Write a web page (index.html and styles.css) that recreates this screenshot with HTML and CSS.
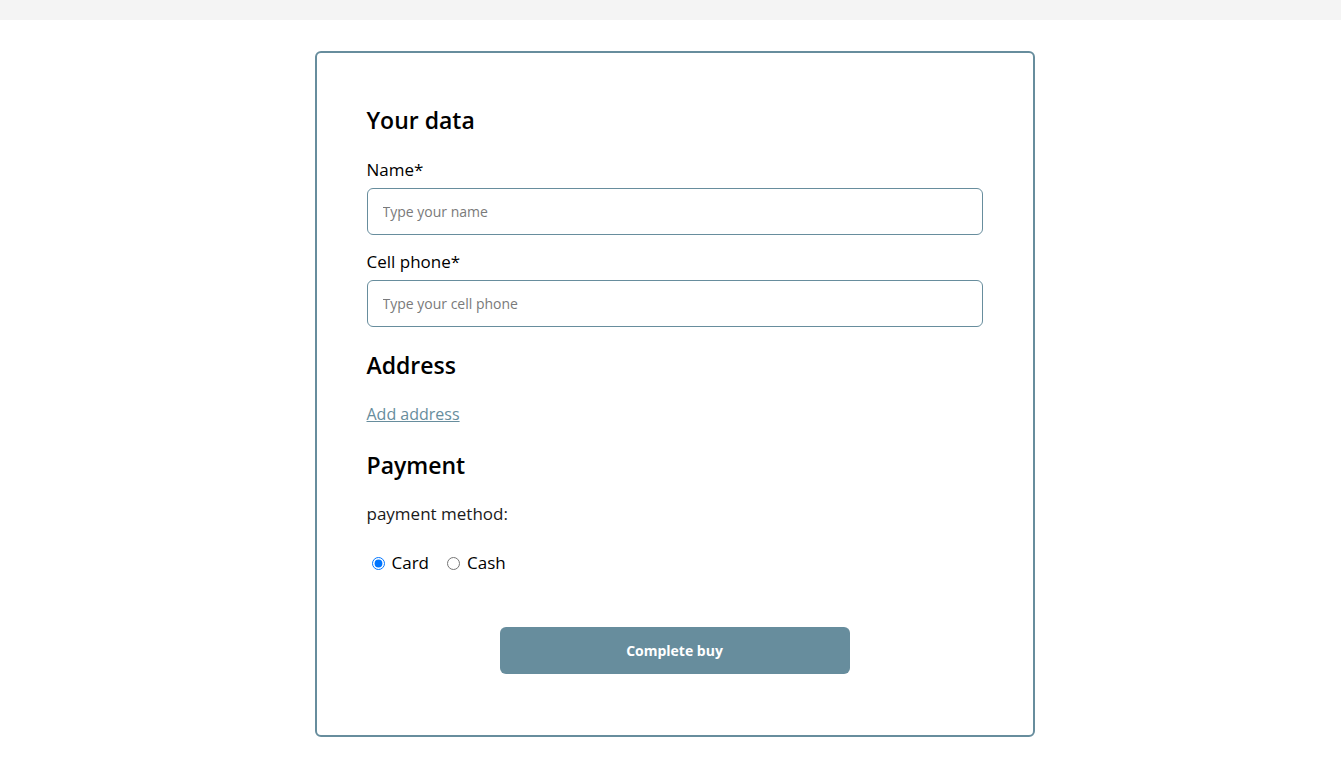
FILE: index.html
```html
<!DOCTYPE html>
<html lang="en">
<head>
<meta charset="utf-8">
<title>Checkout</title>
<link rel="stylesheet" href="styles.css">
</head>
<body>
<header class="topbar"></header>
<main class="page">
  <form class="card">
    <h2 class="title">Your data</h2>
    <label class="label" for="name">Name*</label>
    <input class="field" id="name" type="text" placeholder="Type your name">
    <label class="label label-gap" for="phone">Cell phone*</label>
    <input class="field" id="phone" type="text" placeholder="Type your cell phone">

    <h2 class="title title-gap">Address</h2>
    <a class="link" href="#">Add address</a>

    <h2 class="title title-gap2">Payment</h2>
    <p class="method">payment method:</p>
    <div class="radios">
      <label class="radio"><input type="radio" name="pay" checked> Card</label>
      <label class="radio"><input type="radio" name="pay"> Cash</label>
    </div>

    <div class="actions">
      <button class="btn" type="button">Complete buy</button>
    </div>
  </form>
</main>
</body>
</html>
```
FILE: styles.css
```css
* { box-sizing: border-box; }
html, body { margin: 0; padding: 0; background: #fff; }
body {
  font-family: "Open Sans", "Liberation Sans", sans-serif;
  color: #000;
}
.topbar { height: 20px; background: #f4f4f4; }
.page {
  display: flex;
  justify-content: center;
  padding-top: 31px;
}
.card {
  width: 720px;
  border: 2px solid #678d9d;
  border-radius: 6px;
  padding: 51px 50px 61px 50px;
  display: flex;
  flex-direction: column;
  margin-left: 8px;
}
.title {
  margin: 0;
  font-size: 23px;
  line-height: 33px;
  font-weight: 600;
}
.title-gap { margin-top: 22px; }
.title-gap2 { margin-top: 24px; }
.label {
  margin-top: 21px;
  font-size: 17px;
  line-height: 24px;
  font-weight: 500;
}
.label-gap { margin-top: 15px; }
.field {
  margin-top: 6px;
  height: 47px;
  width: 100%;
  border: 1px solid #678d9d;
  border-radius: 6px;
  padding: 0 15px;
  font-family: inherit;
  font-size: 14px;
  color: #333;
  outline: none;
}
.field::placeholder { color: #7a7a7a; }
.link {
  margin-top: 21px;
  align-self: flex-start;
  font-size: 16px;
  line-height: 22px;
  color: #678d9d;
  text-decoration: underline;
}
.method {
  margin: 20px 0 0;
  font-size: 17px;
  line-height: 24px;
  color: #1a1a1a;
}
.radios {
  margin-top: 25px;
  display: flex;
  gap: 13px;
  font-size: 17px;
  line-height: 24px;
}
.radio {
  display: flex;
  align-items: center;
  gap: 4px;
}
.radio input { margin: 0 3px 0 5px; width: 13px; height: 13px; }
.actions {
  display: flex;
  justify-content: center;
  margin-top: 52px;
}
.btn {
  width: 350px;
  height: 47px;
  border: none;
  border-radius: 6px;
  background: #678d9d;
  color: #fff;
  font-family: inherit;
  font-size: 14px;
  font-weight: 700;
  cursor: pointer;
}
```
